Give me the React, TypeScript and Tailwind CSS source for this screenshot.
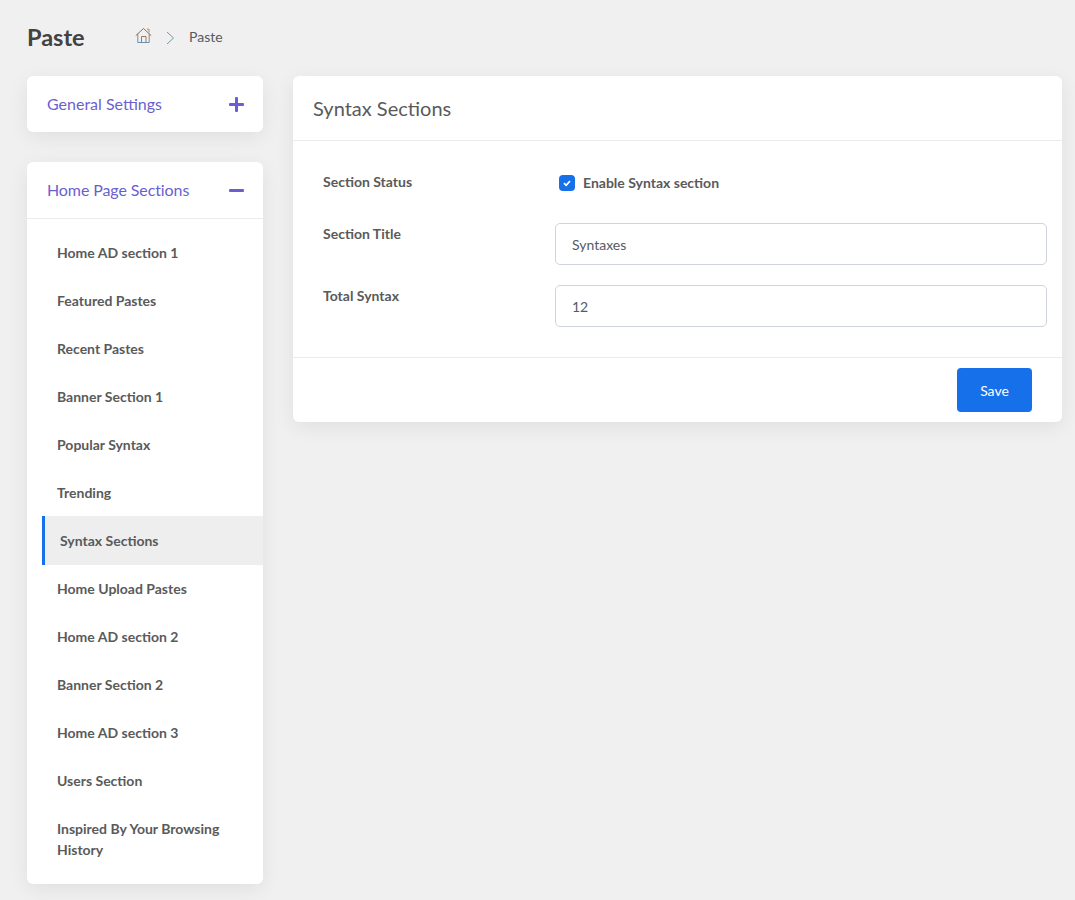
import React from "react";

const items = [
  "Home AD section 1",
  "Featured Pastes",
  "Recent Pastes",
  "Banner Section 1",
  "Popular Syntax",
  "Trending",
  "Syntax Sections",
  "Home Upload Pastes",
  "Home AD section 2",
  "Banner Section 2",
  "Home AD section 3",
  "Users Section",
  "Inspired By Your Browsing History",
];

const cardShadow = "shadow-[0_5px_20px_rgba(0,0,0,0.07)]";

function Bar({ plus }: { plus?: boolean }) {
  return (
    <svg width="15" height="15" viewBox="0 0 15 15" className="shrink-0">
      <rect x="0" y="6" width="15" height="3" rx="1" fill="#6a5fd0" />
      {plus && <rect x="6" y="0" width="3" height="15" rx="1" fill="#6a5fd0" />}
    </svg>
  );
}

export default function App() {
  return (
    <div className="min-h-[900px] bg-[#f0f0f0] pl-[27px] pr-[13px] pt-[22px] pb-4 font-['Lato',sans-serif] text-[14px] leading-[21px] text-[#5a5a5a]">
      <div className="flex h-[30px] items-center">
        <h1 className="w-[108px] text-[23.5px] leading-[30px] font-bold text-[#424242]">Paste</h1>
        <svg width="17" height="17" viewBox="0 0 17 17" fill="none" strokeWidth="1" className="mt-[-4px]">
          <path d="M0.8 8.6 L8.5 1.5 L16.2 8.6" stroke="#9a6a45" />
          <path d="M2.8 6.5 V15.5 H14.2 V6.5" stroke="#6f8fb0" />
          <path d="M6.5 15.5 V9.5 H11 V15.5" stroke="#a0785c" />
          <path d="M12 2.2 H14 V5.5" stroke="#b5895f" />
        </svg>
        <svg width="10" height="14" viewBox="0 0 10 14" fill="none" className="ml-[13px] mt-[2px]">
          <path d="M2 1 L8.5 7 L2 13" stroke="#6f9ba0" strokeWidth="1" />
        </svg>
        <span className="ml-[14px] mt-[-1px] text-[14px] text-[#555b60]">Paste</span>
      </div>

      <div className="mt-[24px] flex items-start gap-[30px]">
        <div className="flex w-[236px] shrink-0 flex-col gap-[30px]">
          <div className={`flex h-[56px] items-center justify-between rounded-[6px] bg-white pl-[20px] pr-[19px] ${cardShadow}`}>
            <span className="mt-[-2px] text-[16px] text-[#6a5fd0]">General Settings</span>
            <Bar plus />
          </div>

          <div className={`rounded-[6px] bg-white pb-[10px] ${cardShadow}`}>
            <div className="flex h-[57px] items-center justify-between border-b border-[#ebebeb] pl-[20px] pr-[19px]">
              <span className="mt-[-2px] text-[16px] tracking-[-0.1px] text-[#6a5fd0]">Home Page Sections</span>
              <Bar />
            </div>
            <ul className="mt-[10px] pl-[15px]">
              {items.map((item) => {
                const active = item === "Syntax Sections";
                return (
                  <li
                    key={item}
                    className={
                      active
                        ? "mt-[-1px] border-l-[3px] border-[#1570ea] bg-[#eeeeee] pt-[14px] pb-[14px] pl-[15px] pr-[15px] font-bold"
                        : "pt-[13px] pb-[14px] pl-[15px] pr-[15px] font-bold"
                    }
                  >
                    {item}
                  </li>
                );
              })}
            </ul>
          </div>
        </div>

        <div className={`flex-1 rounded-[6px] bg-white ${cardShadow}`}>
          <div className="flex h-[65px] items-center border-b border-[#ebebeb] pl-[20px]">
            <h2 className="text-[20px] text-[#5a5a5a]">Syntax Sections</h2>
          </div>
          <div className="flex flex-col gap-[20px] pl-[30px] pr-[15px] pt-[30px] pb-[30px]">
            <div className="flex h-[32px] items-start">
              <label className="w-[232px] shrink-0 font-bold">Section Status</label>
              <div className="ml-[4px] mt-[1px] flex items-center gap-[8px]">
                <span className="flex h-[16px] w-[16px] items-center justify-center rounded-[4px] bg-[#1570ea]">
                  <svg width="10" height="10" viewBox="0 0 10 10" fill="none">
                    <path d="M2 5.2 L4.2 7.3 L8 3" stroke="#ffffff" strokeWidth="1.8" />
                  </svg>
                </span>
                <span className="font-bold">Enable Syntax section</span>
              </div>
            </div>
            <div className="flex items-start">
              <label className="w-[232px] shrink-0 font-bold">Section Title</label>
              <input
                readOnly
                value="Syntaxes"
                className="h-[42px] min-w-0 flex-1 rounded-[5px] border border-[#ced4da] bg-white px-[16px] text-[14px] text-[#555b66] outline-none"
              />
            </div>
            <div className="flex items-start">
              <label className="w-[232px] shrink-0 font-bold">Total Syntax</label>
              <input
                readOnly
                value="12"
                className="h-[42px] min-w-0 flex-1 rounded-[5px] border border-[#ced4da] bg-white px-[16px] text-[14px] text-[#555b66] outline-none"
              />
            </div>
          </div>
          <div className="flex justify-end border-t border-[#ebebeb] pb-[10px] pr-[30px] pt-[10px]">
            <button className="h-[44px] w-[75px] rounded-[4px] bg-[#1570ea] text-[14px] text-white">Save</button>
          </div>
        </div>
      </div>
    </div>
  );
}
